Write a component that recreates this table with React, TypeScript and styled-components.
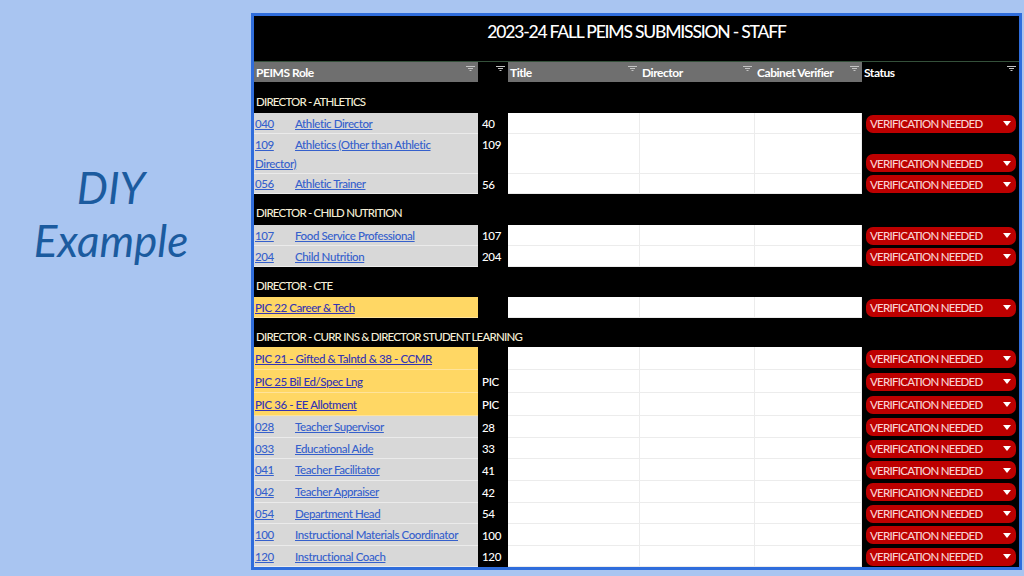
import React from "react";
import styled, { createGlobalStyle } from "styled-components";

const Global = createGlobalStyle`
  html, body { margin: 0; padding: 0; }
  body { font-family: "Lato", "Noto Sans", sans-serif; background: #a9c5f1; }
`;

const Page = styled.div`
  width: 1024px;
  height: 576px;
  display: flex;
  background: #a9c5f1;
  overflow: hidden;
`;

const Side = styled.div`
  width: 251px;
  flex: none;
  padding: 161px 29px 0 0;
  box-sizing: border-box;
`;

const Diy = styled.div`
  font-family: "Lato", sans-serif;
  font-style: italic;
  font-size: 44px;
  line-height: 53px;
  color: #1b5b9f;
  text-align: center;
`;

const Frame = styled.div`
  margin-top: 13px;
  width: 771px;
  height: 557px;
  box-sizing: border-box;
  border: 3px solid #2f6ddc;
  background: #000;
  display: flex;
  flex-direction: column;
  overflow: hidden;
`;

const TitleBar = styled.div`
  height: 46px;
  box-sizing: border-box;
  padding-top: 4px;
  text-align: center;
  color: #fff;
  font-size: 17.5px;
  font-weight: 500;
  letter-spacing: -1.2px;
  line-height: 24px;
  border-bottom: 1px solid #34503a;
`;

const Cols = "224px 30px 132px 115px 107px 157px";

const HeaderRow = styled.div`
  display: grid;
  grid-template-columns: ${Cols};
  height: 21px;
`;

const HeadCell = styled.div<{ $gray?: boolean; $end?: boolean }>`
  background: ${(p) => (p.$gray ? "#6f6f6f" : "#000")};
  color: #fff;
  font-weight: 700;
  font-size: 12px;
  letter-spacing: -0.45px;
  display: flex;
  align-items: center;
  justify-content: ${(p) => (p.$end ? "flex-end" : "space-between")};
  padding: 0 3px 0 2px;
  box-sizing: border-box;
  margin-bottom: 1px;
`;

const FilterIcon = () => (
  <svg width="9" height="8" viewBox="0 0 9 8" style={{ flex: "none", marginTop: -6 }}>
    <g stroke="#c4c4c4" strokeWidth="1">
      <line x1="0" y1="1.5" x2="9" y2="1.5" />
      <line x1="2" y1="3.5" x2="7" y2="3.5" />
      <line x1="3.5" y1="5.5" x2="5.5" y2="5.5" />
    </g>
  </svg>
);

const Section = styled.div<{ $h: number }>`
  height: ${(p) => p.$h}px;
  box-sizing: border-box;
  padding: 10px 0 0 2px;
  color: #f4eed6;
  font-size: 11.5px;
  font-weight: 500;
  letter-spacing: -0.8px;
  line-height: 18px;
`;

const Row = styled.div<{ $h: number }>`
  display: grid;
  grid-template-columns: ${Cols};
  height: ${(p) => p.$h}px;
`;

const RoleCell = styled.div<{ $pic?: boolean; $tall?: boolean }>`
  background: ${(p) => (p.$pic ? "#ffd764" : "#d8d8d8")};
  border-bottom: 1px solid ${(p) => (p.$pic ? "#ffe39a" : "#ebebeb")};
  box-sizing: border-box;
  padding: ${(p) => (p.$tall ? "1px 2px 0 1px" : "0 0 0 1px")};
  display: flex;
  align-items: ${(p) => (p.$tall ? "flex-start" : "center")};
  font-size: 11.5px;
  font-weight: 500;
  letter-spacing: -0.4px;
  line-height: 19px;
`;

const RoleLink = styled.a<{ $pic?: boolean }>`
  color: ${(p) => (p.$pic ? "#3434b4" : "#3560cc")};
  text-decoration: underline;
  white-space: pre;
  tab-size: 40px;
  -moz-tab-size: 40px;
`;

const CodeCell = styled.div<{ $tall?: boolean }>`
  color: #fff;
  font-size: 11.5px;
  font-weight: 500;
  letter-spacing: -0.3px;
  line-height: 19px;
  padding: ${(p) => (p.$tall ? "1px 0 0 4px" : "0 0 0 4px")};
  display: flex;
  align-items: ${(p) => (p.$tall ? "flex-start" : "center")};
`;

const BlankCell = styled.div`
  background: #fff;
  border-right: 1px solid #ececec;
  border-bottom: 1px solid #ececec;
  box-sizing: border-box;
`;

const StatusCell = styled.div<{ $tall?: boolean }>`
  display: flex;
  align-items: ${(p) => (p.$tall ? "flex-end" : "center")};
  padding: ${(p) => (p.$tall ? "0 0 2px 4px" : "0 0 0 4px")};
`;

const Badge = styled.div`
  width: 150px;
  height: 18px;
  border-radius: 7px;
  background: #bd0000;
  color: #f9d2d2;
  font-size: 11.5px;
  font-weight: 500;
  letter-spacing: -0.75px;
  display: flex;
  align-items: center;
  justify-content: space-between;
  padding: 0 5px 0 4px;
  box-sizing: border-box;
`;

const Caret = () => (
  <svg width="8" height="5" viewBox="0 0 8 5">
    <polygon points="0,0 8,0 4,5" fill="#fff" />
  </svg>
);

type Item =
  | { kind: "section"; text: string; h: number }
  | { kind: "row"; code: string; label: string; num: string; h: number; pic?: boolean; tall?: boolean };

const items: Item[] = [
  { kind: "section", text: "DIRECTOR - ATHLETICS", h: 30 },
  { kind: "row", code: "040", label: "Athletic Director", num: "40", h: 21 },
  { kind: "row", code: "109", label: "Athletics (Other than Athletic\nDirector)", num: "109", h: 40, tall: true },
  { kind: "row", code: "056", label: "Athletic Trainer", num: "56", h: 20 },
  { kind: "section", text: "DIRECTOR - CHILD NUTRITION", h: 31 },
  { kind: "row", code: "107", label: "Food Service Professional", num: "107", h: 21 },
  { kind: "row", code: "204", label: "Child Nutrition", num: "204", h: 21 },
  { kind: "section", text: "DIRECTOR - CTE", h: 30 },
  { kind: "row", code: "", label: "PIC 22 Career & Tech", num: "", h: 21, pic: true },
  { kind: "section", text: "DIRECTOR - CURR INS & DIRECTOR STUDENT LEARNING", h: 29 },
  { kind: "row", code: "", label: "PIC 21 - Gifted & Talntd & 38 - CCMR", num: "", h: 23, pic: true },
  { kind: "row", code: "", label: "PIC 25 Bil Ed/Spec Lng", num: "PIC", h: 23, pic: true },
  { kind: "row", code: "", label: "PIC 36 - EE Allotment", num: "PIC", h: 23, pic: true },
  { kind: "row", code: "028", label: "Teacher Supervisor", num: "28", h: 22 },
  { kind: "row", code: "033", label: "Educational Aide", num: "33", h: 21 },
  { kind: "row", code: "041", label: "Teacher Facilitator", num: "41", h: 22 },
  { kind: "row", code: "042", label: "Teacher Appraiser", num: "42", h: 22 },
  { kind: "row", code: "054", label: "Department Head", num: "54", h: 21 },
  { kind: "row", code: "100", label: "Instructional Materials Coordinator", num: "100", h: 22 },
  { kind: "row", code: "120", label: "Instructional Coach", num: "120", h: 21 },
];

export default function App() {
  return (
    <>
      <Global />
      <Page>
        <Side>
          <Diy>
            DIY
            <br />
            Example
          </Diy>
        </Side>
        <Frame>
          <TitleBar>2023-24 FALL PEIMS SUBMISSION - STAFF</TitleBar>
          <HeaderRow>
            <HeadCell $gray>
              PEIMS Role <FilterIcon />
            </HeadCell>
            <HeadCell $end>
              <FilterIcon />
            </HeadCell>
            <HeadCell $gray>
              Title <FilterIcon />
            </HeadCell>
            <HeadCell $gray>
              Director <FilterIcon />
            </HeadCell>
            <HeadCell $gray>
              Cabinet Verifier <FilterIcon />
            </HeadCell>
            <HeadCell>
              Status <FilterIcon />
            </HeadCell>
          </HeaderRow>
          {items.map((it, i) =>
            it.kind === "section" ? (
              <Section key={i} $h={it.h}>
                {it.text}
              </Section>
            ) : (
              <Row key={i} $h={it.h}>
                <RoleCell $pic={it.pic} $tall={it.tall}>
                  <RoleLink href="#" $pic={it.pic}>
                    {it.code ? `${it.code}\t${it.label}` : it.label}
                  </RoleLink>
                </RoleCell>
                <CodeCell $tall={it.tall}>{it.num}</CodeCell>
                <BlankCell />
                <BlankCell />
                <BlankCell />
                <StatusCell $tall={it.tall}>
                  <Badge>
                    VERIFICATION NEEDED
                    <Caret />
                  </Badge>
                </StatusCell>
              </Row>
            )
          )}
        </Frame>
      </Page>
    </>
  );
}
